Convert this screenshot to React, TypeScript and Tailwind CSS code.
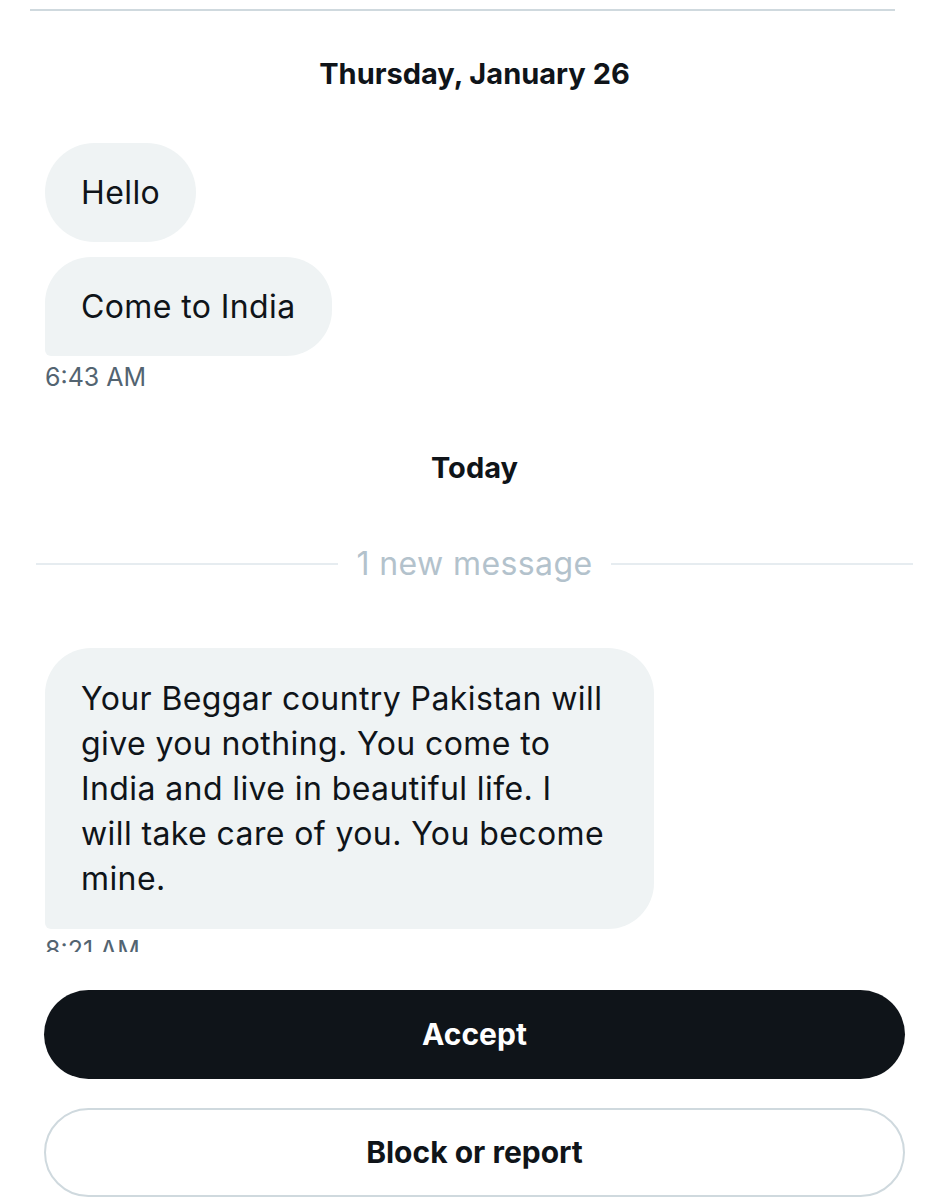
import React from 'react';

const font = { fontFamily: 'Inter, "Liberation Sans", sans-serif' };

function Bubble({ children, last = false, className = 'w-fit' }: { children: React.ReactNode; last?: boolean; className?: string }) {
  return (
    <div
      className={`bg-[#eff3f4] px-[36px] text-[32px] leading-[45px] tracking-[0.4px] text-[#0f1419] ${
        last ? 'rounded-[46px] rounded-bl-[6px]' : 'rounded-[50px]'
      } ${className}`}
    >
      {children}
    </div>
  );
}

export default function App() {
  return (
    <div className="flex h-[1200px] w-[949px] flex-col overflow-hidden bg-white" style={font}>
      {/* top divider */}
      <div className="ml-[30px] mt-[9px] h-[2px] w-[865px] bg-[#cfd9de]" />

      {/* messages, clipped above the buttons */}
      <div className="flex h-[941px] flex-col overflow-hidden">
        <div className="mt-[46px] text-center text-[29px] font-bold leading-[34px] text-[#0f1419]">
          Thursday, January 26
        </div>

        <div className="ml-[45px] mt-[52px] flex flex-col gap-[15px]">
          <Bubble className="w-fit py-[27px]">Hello</Bubble>
          <Bubble last className="w-fit py-[27px]">Come to India</Bubble>
        </div>
        <div className="ml-[45px] mt-[6px] text-[25px] leading-[30px] text-[#536471]">6:43 AM</div>

        <div className="mt-[59px] text-center text-[29px] font-bold leading-[34px] text-[#0f1419]">Today</div>

        <div className="mx-[36px] mt-[59px] flex items-center gap-[18px]">
          <div className="h-[2px] flex-1 bg-[#e6ecf0]" />
          <span className="text-[32px] leading-[40px] tracking-[0.4px] text-[#b3c2cc]">1 new message</span>
          <div className="h-[2px] flex-1 bg-[#e6ecf0]" />
        </div>

        <div className="ml-[45px] mt-[64px]">
          <Bubble last className="w-[609px] py-[28px]">
            Your Beggar country Pakistan will
            <br />
            give you nothing. You come to
            <br />
            India and live in beautiful life. I
            <br />
            will take care of you. You become
            <br />
            mine.
          </Bubble>
        </div>
        <div className="ml-[45px] mt-[6px] text-[25px] leading-[30px] text-[#536471]">8:21 AM</div>
      </div>

      {/* actions */}
      <div className="mx-[44px] mt-[38px] flex flex-col gap-[29px]">
        <button className="flex h-[89px] items-center justify-center rounded-full bg-[#0f1419] text-[30px] font-bold text-white">
          Accept
        </button>
        <button className="flex h-[89px] items-center justify-center rounded-full border-2 border-[#cfd9de] bg-white text-[30px] font-bold text-[#0f1419]">
          Block or report
        </button>
      </div>
    </div>
  );
}
